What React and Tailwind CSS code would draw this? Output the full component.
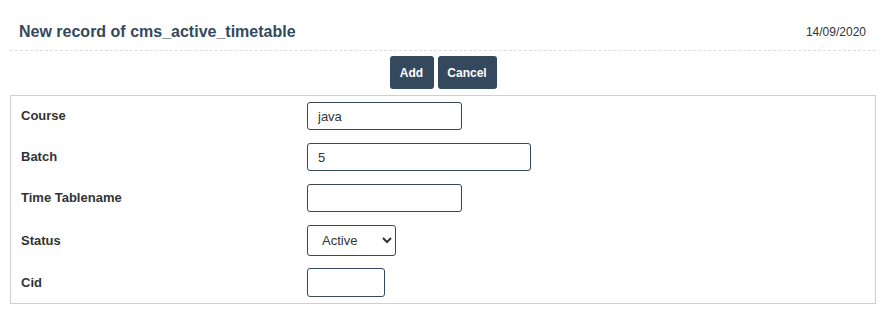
import { useState } from "react";

const fields = [
    { label: "Course", value: "java", width: "w-[155px]", mt: "mt-[6px]" },
    { label: "Batch", value: "5", width: "w-[224px]", mt: "mt-[13px]" },
    { label: "Time Tablename", value: "", width: "w-[155px]", mt: "mt-[13px]" },
];

export default function App() {
    const [status, setStatus] = useState("Active");

    return (
        <div className="ml-[10px] w-[866px] font-['Liberation_Sans',Arial,sans-serif] text-[#333]">
            {/* HEADER */}
            <div className="flex items-center justify-between border-b border-dashed border-[#dcdcdc] pt-[22px] pb-[8px] pl-[9px] pr-[10px]">
                <h1 className="text-[16px] leading-[20px] font-bold text-[#34495e]">
                    New record of cms_active_timetable
                </h1>
                <span className="text-[12px] leading-[20px] text-[#333]">14/09/2020</span>
            </div>

            {/* BUTTONS */}
            <div className="mt-[5px] flex justify-center gap-[4px]">
                <button className="h-[33px] w-[44px] rounded-[3px] bg-[#34495e] text-[12px] font-bold text-white">
                    Add
                </button>
                <button className="h-[33px] w-[59px] rounded-[3px] bg-[#34495e] text-[12px] font-bold text-white">
                    Cancel
                </button>
            </div>

            {/* FORM */}
            <div className="mt-[6px] border border-[#cfcfcf] pb-[6px] pl-[10px]">
                {fields.map((f) => (
                    <div key={f.label} className={`flex items-center ${f.mt}`}>
                        <label className="w-[286px] text-[13px] font-bold">{f.label}</label>
                        <input
                            defaultValue={f.value}
                            className={`h-[28px] ${f.width} rounded-[3px] border border-[#34495e] px-[10px] text-[13px] text-[#333] outline-none`}
                        />
                    </div>
                ))}

                <div className="mt-[13px] flex items-center">
                    <label className="w-[286px] text-[13px] font-bold">Status</label>
                    <select
                        value={status}
                        onChange={(e) => setStatus(e.target.value)}
                        className="h-[31px] w-[89px] rounded-[3px] border border-[#34495e] bg-white pl-[10px] text-[13px] text-[#333] outline-none"
                    >
                        <option>Active</option>
                        <option>Inactive</option>
                    </select>
                </div>

                <div className="mt-[12px] flex items-center">
                    <label className="w-[286px] text-[13px] font-bold">Cid</label>
                    <input className="h-[29px] w-[78px] rounded-[3px] border border-[#34495e] px-[10px] text-[13px] outline-none" />
                </div>
            </div>
        </div>
    );
}
